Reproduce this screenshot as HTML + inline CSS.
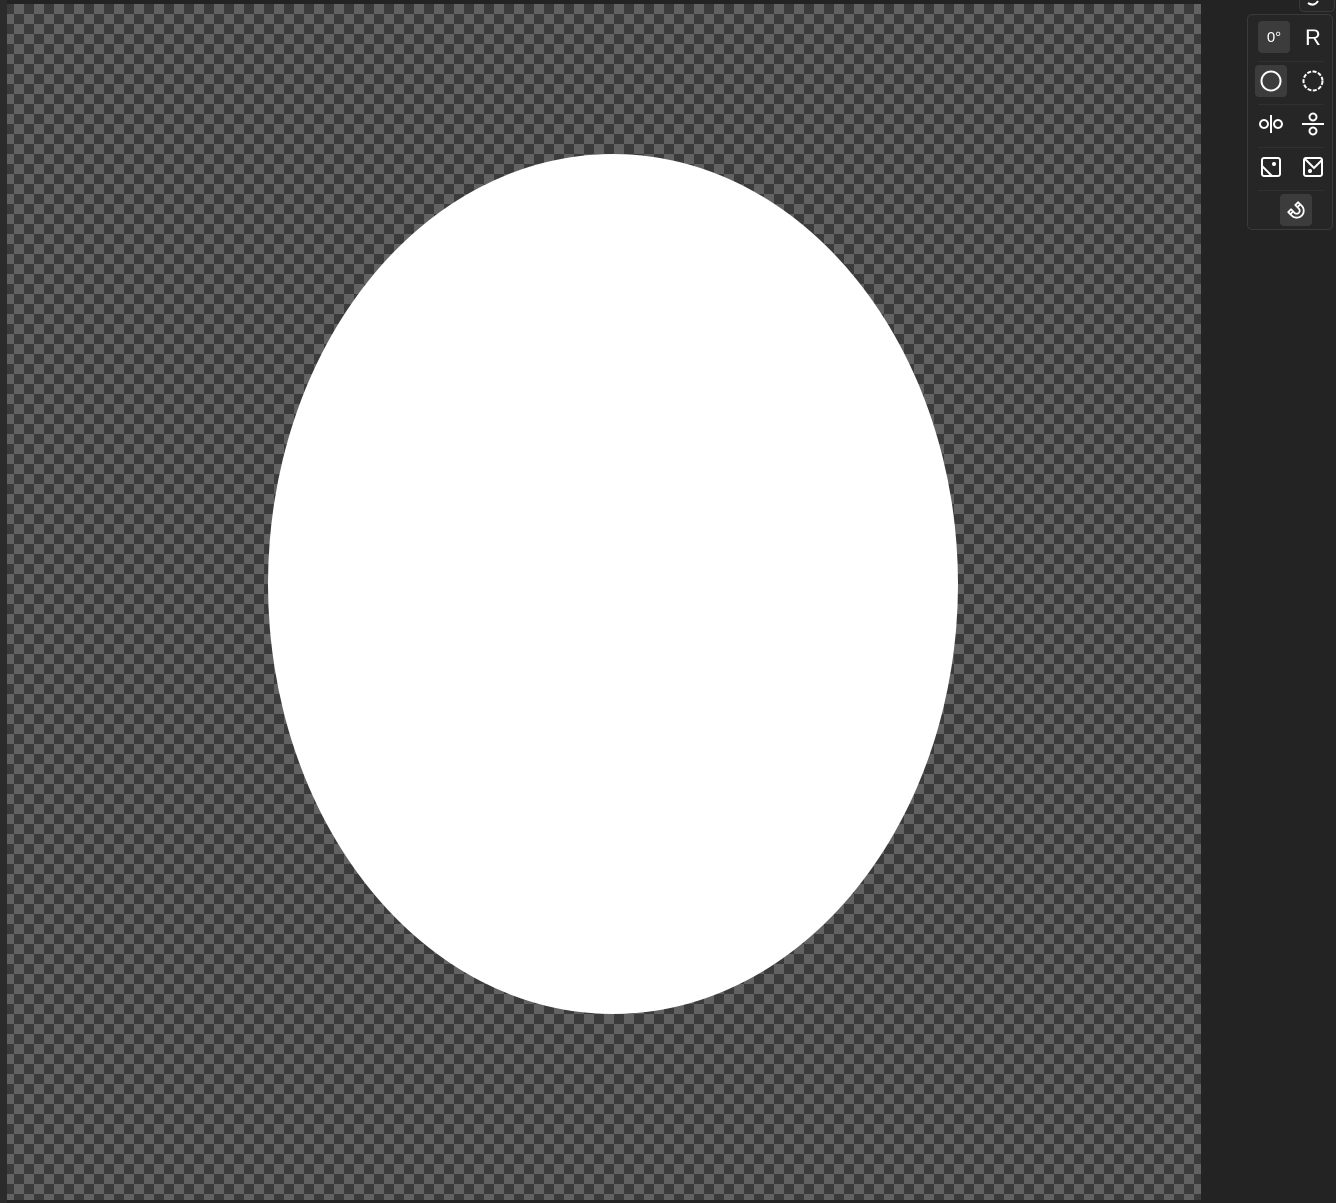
<!DOCTYPE html>
<html><head><meta charset="utf-8"><style>
html,body{margin:0;padding:0;width:1336px;height:1203px;overflow:hidden;background:#232323;font-family:"Liberation Sans",sans-serif;}
.left{position:absolute;left:0;top:0;width:7px;height:1203px;background:#2b2b2b}
.canvas{position:absolute;left:7px;top:4px;width:1194px;height:1196px;
background-color:#3b3b3b;
background-image:linear-gradient(45deg,#626262 25%,transparent 25%,transparent 75%,#626262 75%),linear-gradient(45deg,#626262 25%,transparent 25%,transparent 75%,#626262 75%);
background-size:20px 20px;background-position:-3px 0,7px 10px;}
.ell{position:absolute;left:261px;top:150px;width:690px;height:860px;border-radius:50%;background:#fff}
.panel{position:absolute;left:1247px;top:14px;width:86px;height:216px;border:1px solid #3a3a3a;border-radius:5px;background:#262626;box-sizing:border-box}
.btn{position:absolute;width:32px;height:32px;border-radius:4px;display:flex;align-items:center;justify-content:center;color:#fff}
.sel{background:#3c3c3c}
.sep{position:absolute;left:10px;width:66px;height:1px;background:#303030}
.top{position:absolute;left:1299px;top:-6px;width:34px;height:16px;border:1px solid #3a3a3a;border-radius:5px;background:#262626}
</style></head><body>
<div class="left"></div>
<div class="canvas"><div class="ell"></div></div>
<div class="top"><svg width="34" height="14" viewBox="0 0 34 14"><path d="M8 8 q6 4 10 -2" stroke="#fff" stroke-width="2" fill="none"/></svg></div>
<div class="panel">
 <div class="btn sel" style="left:10px;top:6px;font-size:15px">0°</div>
 <div class="btn" style="left:49px;top:7px;font-size:22px">R</div>
 <div class="sep" style="top:46px"></div>
 <div class="btn sel" style="left:7px;top:50px"><svg width="24" height="24"><circle cx="12" cy="12" r="9.5" stroke="#fff" stroke-width="2" fill="none"/></svg></div>
 <div class="btn" style="left:49px;top:50px"><svg width="24" height="24"><circle cx="12" cy="12" r="9.5" stroke="#fff" stroke-width="2" fill="none" stroke-dasharray="4 1.5"/></svg></div>
 <div class="sep" style="top:89px"></div>
 <div class="btn" style="left:7px;top:93px"><svg width="26" height="24"><circle cx="6" cy="12" r="4" stroke="#fff" stroke-width="2" fill="none"/><circle cx="20" cy="12" r="4" stroke="#fff" stroke-width="2" fill="none"/><path d="M13 3v18" stroke="#fff" stroke-width="2"/></svg></div>
 <div class="btn" style="left:49px;top:93px"><svg width="26" height="26"><circle cx="13" cy="6" r="3.5" stroke="#fff" stroke-width="2" fill="none"/><circle cx="13" cy="20" r="3.5" stroke="#fff" stroke-width="2" fill="none"/><path d="M2 13h22" stroke="#fff" stroke-width="2"/></svg></div>
 <div class="sep" style="top:132px"></div>
 <div class="btn" style="left:7px;top:136px"><svg width="24" height="24"><rect x="3" y="3" width="18" height="18" rx="2" stroke="#fff" stroke-width="2" fill="none"/><path d="M3 11l10 10" stroke="#fff" stroke-width="2"/><circle cx="15" cy="9" r="2" fill="#fff"/></svg></div>
 <div class="btn" style="left:49px;top:136px"><svg width="24" height="24"><rect x="3" y="3" width="18" height="18" rx="2" stroke="#fff" stroke-width="2" fill="none"/><path d="M3 3l10 10 8-8" stroke="#fff" stroke-width="2" fill="none"/><circle cx="9" cy="16" r="2" fill="#fff"/></svg></div>
 <div class="sep" style="top:175px"></div>
 <div class="btn sel" style="left:32px;top:179px"><svg width="24" height="24" viewBox="0 0 24 24"><g transform="rotate(-45 12 12)"><path d="M5 8 v5 a7 7 0 0 0 14 0 v-5 h-4 v5 a3 3 0 0 1 -6 0 v-5 z M5 11h4 M15 11h4" stroke="#fff" stroke-width="1.8" fill="none" stroke-linejoin="round"/></g></svg></div>
</div>
</body></html>
